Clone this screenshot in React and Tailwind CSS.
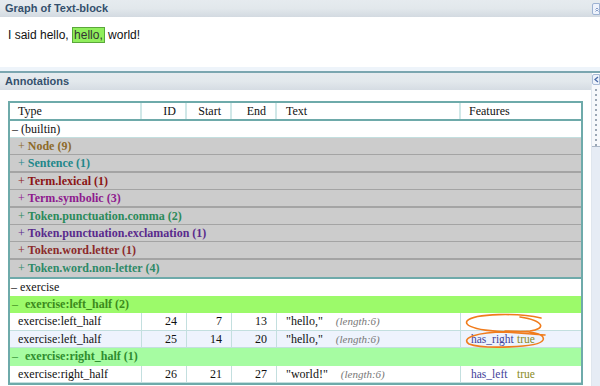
import React from 'react';

const groups = [
  { label: 'Node (9)', color: 'text-[#8d6a2a]', h: 'h-[17px] border-b' },
  { label: 'Sentence (1)', color: 'text-[#22878a]', h: 'h-[18px] border-b-2' },
  { label: 'Term.lexical (1)', color: 'text-[#8b1515]', h: 'h-[17px] border-b' },
  { label: 'Term.symbolic (3)', color: 'text-[#8e1a8e]', h: 'h-[18px] border-b-2' },
  { label: 'Token.punctuation.comma (2)', color: 'text-[#2b8a5a]', h: 'h-[17px] border-b' },
  { label: 'Token.punctuation.exclamation (1)', color: 'text-[#5a2a8c]', h: 'h-[17px] border-b' },
  { label: 'Token.word.letter (1)', color: 'text-[#8b2a2a]', h: 'h-[18px] border-b-2' },
  { label: 'Token.word.non-letter (4)', color: 'text-[#2e8a68]', h: 'h-[17px]' },
];

const cols = 'grid grid-cols-[132px_45px_45px_45px_184px_1fr]';

function DataRow({ type, id, start, end, text, feat, bg, h }) {
  const cell = 'border-r border-[#c3dfdf]';
  return (
    <div className={`${cols} ${bg} ${h} border-b border-[#c3dfdf] leading-[16px]`}>
      <div className={`${cell} pl-[8px]`}>{type}</div>
      <div className={`${cell} text-right pr-[9px]`}>{id}</div>
      <div className={`${cell} text-right pr-[9px]`}>{start}</div>
      <div className={`${cell} text-right pr-[9px]`}>{end}</div>
      <div className={`${cell} pl-[9px] whitespace-nowrap`}>
        {text}
        <span className="ml-[13px] italic text-[11px] text-[#777]">(length:6)</span>
      </div>
      <div className="pl-[10px] whitespace-nowrap text-[11.5px]">
        {feat && (
          <>
            <span className="inline-block w-[46px] text-[#3f3f9a]">{feat}</span>
            <span className="text-[#8a8a1e]">true</span>
          </>
        )}
      </div>
    </div>
  );
}

export default function App() {
  return (
    <div className="relative w-[600px] h-[386px] overflow-hidden bg-white" style={{ fontFamily: '"Liberation Sans", Arial, sans-serif' }}>
      {/* Graph panel */}
      <div className="flex items-center justify-between h-[17px] bg-gradient-to-b from-[#e6ebef] via-[#e2e8ec] to-[#d3dae1] pl-[5px] pr-0">
        <span className="text-[11px] font-bold text-[#34506c]">Graph of Text-block</span>
        <div className="w-[8px] h-[12px] mt-[1px] border border-[#9db2d2] rounded-l-[2px] bg-[#edf2fb] flex items-start justify-center overflow-hidden">
          <svg width="8" height="10" viewBox="0 0 8 10" className="mt-[1px] ml-[2px]">
            <path d="M1 4 L4 1 L7 4 M1 8 L4 5 L7 8" stroke="#4a6aa8" strokeWidth="1.3" fill="none" />
          </svg>
        </div>
      </div>
      <div className="h-[50px] bg-white pl-[8px] pt-[9px] text-[12px] text-[#111]">
        I said hello,{' '}
        <span className="bg-[#90ee5c] border border-[#5aa83a] px-[1px] text-[#333]">hello,</span>{' '}
        world!
      </div>
      <div className="h-[4px] bg-[#eef4fa]" />
      <div className="h-[2px] bg-[#7ba6b0]" />

      {/* Annotations panel */}
      <div className="flex h-[313px]">
        <div className="w-[594px] flex flex-col">
          <div className="h-[17px] flex items-center pl-[5px] bg-gradient-to-b from-[#e6ebef] via-[#e2e8ec] to-[#d5dce3]">
            <span className="text-[11px] font-bold text-[#34506c]">Annotations</span>
          </div>
          <div className="flex-1 bg-white pt-[11px] pl-[8px] pr-[8px]">
            <div
              className="border-2 border-[#6eaaaa] text-[12px] text-[#111]"
              style={{ fontFamily: '"Liberation Serif", "Times New Roman", serif' }}
            >
              {/* header */}
              <div className={`${cols} h-[18px] border-b-2 border-[#6eaaaa] leading-[16px]`}>
                <div className="border-r-2 border-[#d0e8e8] pl-[8px]">Type</div>
                <div className="border-r-2 border-[#d0e8e8] text-right pr-[9px]">ID</div>
                <div className="border-r-2 border-[#d0e8e8] text-right pr-[9px]">Start</div>
                <div className="border-r-2 border-[#d0e8e8] text-right pr-[9px]">End</div>
                <div className="border-r-2 border-[#d0e8e8] pl-[9px]">Text</div>
                <div className="pl-[8px]">Features</div>
              </div>
              <div className="h-[17px] leading-[16px] pl-[2px] border-b border-[#c3dfdf]">– (builtin)</div>
              {groups.map((g) => (
                <div key={g.label} className={`${g.h} bg-[#cccccc] border-[#a4a4a4] pl-[8px] leading-[16px] ${g.color}`}>
                  + <span className="font-bold">{g.label}</span>
                </div>
              ))}
              <div className="h-[19px] border-t-2 border-[#6eaaaa] leading-[16px] pl-[1px]">– exercise</div>
              <div className="h-[17px] bg-[#9cfa6a] leading-[16px] pl-[2px] text-[#3b8a1c]">
                –<span className="ml-[7px] font-bold">exercise:left_half (2)</span>
              </div>
              <DataRow type="exercise:left_half" id="24" start="7" end="13" text={'"hello,"'} bg="bg-white" h="h-[18px]" />
              <DataRow type="exercise:left_half" id="25" start="14" end="20" text={'"hello,"'} feat="has_right" bg="bg-[#eef3fd]" h="h-[17px]" />
              <div className="h-[18px] bg-[#a6fca2] leading-[16px] pl-[2px] text-[#2f8d2f]">
                –<span className="ml-[7px] font-bold">exercise:right_half (1)</span>
              </div>
              <DataRow type="exercise:right_half" id="26" start="21" end="27" text={'"world!"'} feat="has_left" bg="bg-white" h="h-[17px]" />
            </div>
          </div>
        </div>
        {/* collapsed side strip */}
        <div className="flex-1 flex flex-col border-l border-[#dfe6ee]">
          <div className="h-[11px] border border-[#a9bbd6] rounded-l-[2px] bg-[#eef3fb] mt-[1px] flex items-center pl-[1px]">
            <svg width="5" height="7" viewBox="0 0 5 7">
              <path d="M4 1 L1 3.5 L4 6" stroke="#4a6aa8" strokeWidth="1.3" fill="none" />
            </svg>
          </div>
          <div className="h-[61px] bg-[#f6f8fb] flex flex-col items-center gap-[3px] pt-[4px]">
            {Array.from({ length: 12 }).map((_, i) => (
              <div key={i} className="w-[2px] h-[2px] bg-[#9aa6b4]" />
            ))}
          </div>
          <div className="h-[1px] bg-[#aab6c6]" />
          <div className="flex-1 bg-[#e6ecf5]" />
        </div>
      </div>

      {/* hand-drawn marks */}
      <svg className="absolute top-0 left-0 pointer-events-none" width="600" height="386">
        <path
          d="M541 318 C520 313, 474 313, 467 321 C462 329, 500 334, 530 331 C546 329, 545 321, 520 317"
          stroke="#f07c1c" strokeWidth="1.6" fill="none" strokeLinecap="round"
        />
        <path
          d="M505 331 C528 331, 546 333, 543 340 C539 348, 482 349, 469 344 C460 338, 478 332, 505 332 L545 335"
          stroke="#f07c1c" strokeWidth="1.6" fill="none" strokeLinecap="round"
        />
      </svg>
    </div>
  );
}
